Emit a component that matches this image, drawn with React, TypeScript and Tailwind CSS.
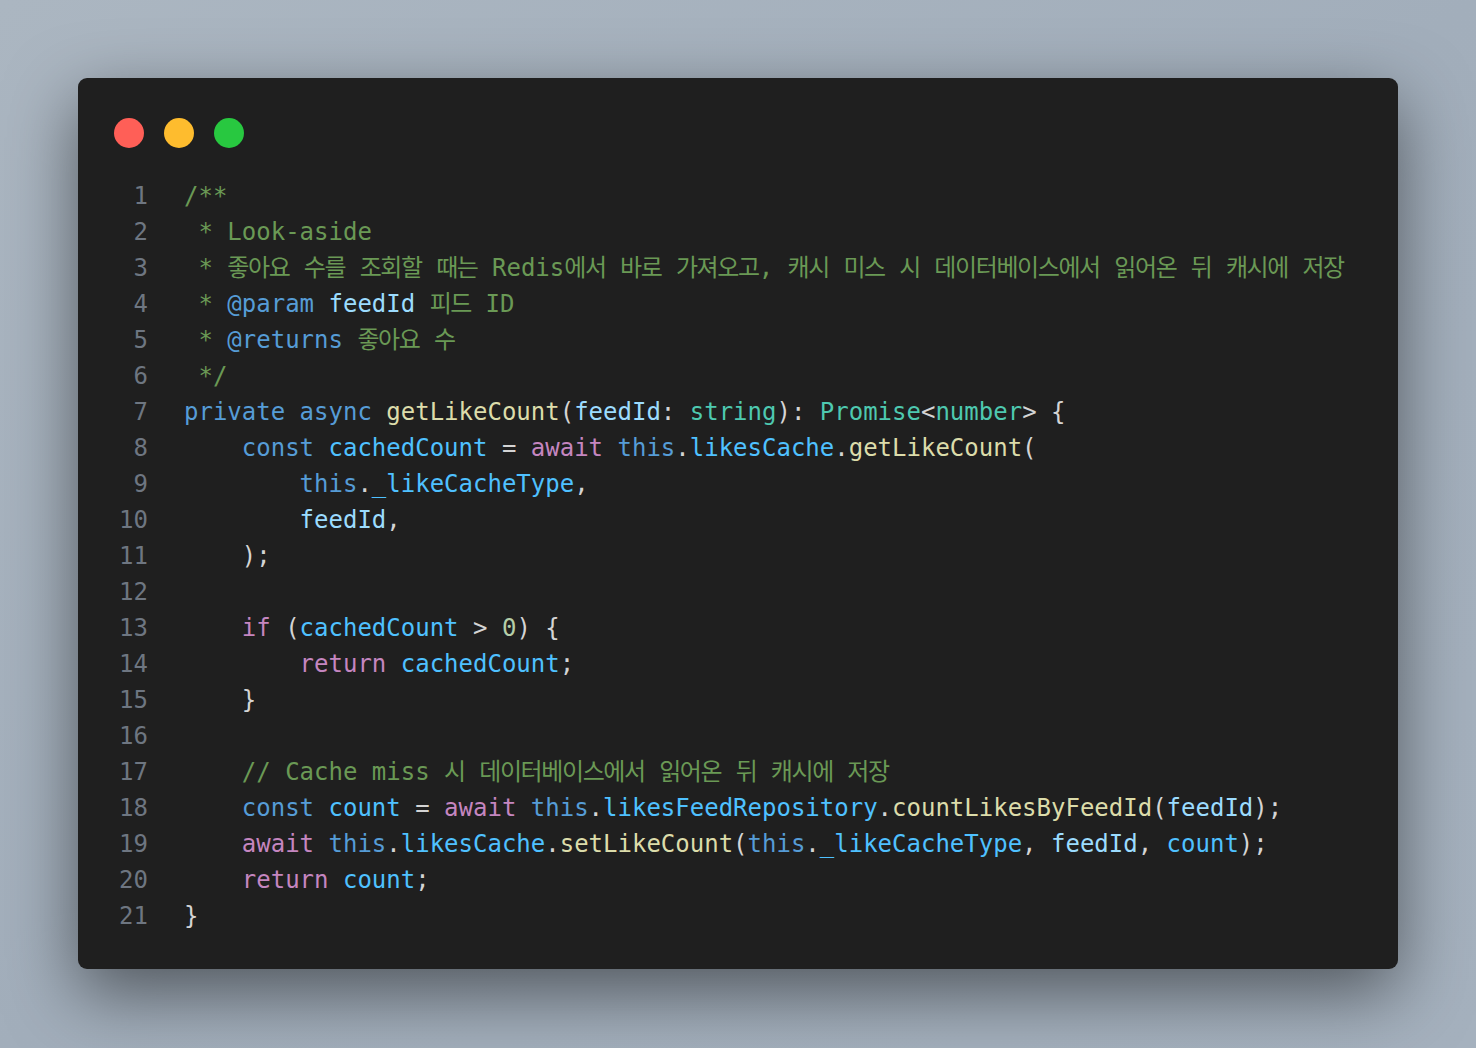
import React from "react";

type Tok = [string, string];

const C = {
  cm: "text-[#6a9955]",
  kw: "text-[#569cd6]",
  ctl: "text-[#c586c0]",
  fn: "text-[#dcdcaa]",
  v: "text-[#9cdcfe]",
  cn: "text-[#4fc1ff]",
  ty: "text-[#4ec9b0]",
  num: "text-[#b5cea8]",
  p: "text-[#d4d4d4]",
};

const lines: Tok[][] = [
  [["/**", C.cm]],
  [[" * Look-aside", C.cm]],
  [[" * 좋아요 수를 조회할 때는 Redis에서 바로 가져오고, 캐시 미스 시 데이터베이스에서 읽어온 뒤 캐시에 저장", C.cm]],
  [[" * ", C.cm], ["@param", C.kw], [" ", C.cm], ["feedId", C.v], [" 피드 ID", C.cm]],
  [[" * ", C.cm], ["@returns", C.kw], [" 좋아요 수", C.cm]],
  [[" */", C.cm]],
  [
    ["private async ", C.kw],
    ["getLikeCount", C.fn],
    ["(", C.p],
    ["feedId", C.v],
    [": ", C.p],
    ["string", C.ty],
    ["): ", C.p],
    ["Promise", C.ty],
    ["<", C.p],
    ["number", C.ty],
    ["> {", C.p],
  ],
  [
    ["    const ", C.kw],
    ["cachedCount", C.cn],
    [" = ", C.p],
    ["await", C.ctl],
    [" ", C.p],
    ["this", C.kw],
    [".", C.p],
    ["likesCache", C.cn],
    [".", C.p],
    ["getLikeCount", C.fn],
    ["(", C.p],
  ],
  [["        ", C.p], ["this", C.kw], [".", C.p], ["_likeCacheType", C.cn], [",", C.p]],
  [["        ", C.p], ["feedId", C.v], [",", C.p]],
  [["    );", C.p]],
  [],
  [
    ["    ", C.p],
    ["if", C.ctl],
    [" (", C.p],
    ["cachedCount", C.cn],
    [" > ", C.p],
    ["0", C.num],
    [") {", C.p],
  ],
  [["        ", C.p], ["return", C.ctl], [" ", C.p], ["cachedCount", C.cn], [";", C.p]],
  [["    }", C.p]],
  [],
  [["    // Cache miss 시 데이터베이스에서 읽어온 뒤 캐시에 저장", C.cm]],
  [
    ["    const ", C.kw],
    ["count", C.cn],
    [" = ", C.p],
    ["await", C.ctl],
    [" ", C.p],
    ["this", C.kw],
    [".", C.p],
    ["likesFeedRepository", C.cn],
    [".", C.p],
    ["countLikesByFeedId", C.fn],
    ["(", C.p],
    ["feedId", C.v],
    [");", C.p],
  ],
  [
    ["    ", C.p],
    ["await", C.ctl],
    [" ", C.p],
    ["this", C.kw],
    [".", C.p],
    ["likesCache", C.cn],
    [".", C.p],
    ["setLikeCount", C.fn],
    ["(", C.p],
    ["this", C.kw],
    [".", C.p],
    ["_likeCacheType", C.cn],
    [", ", C.p],
    ["feedId", C.v],
    [", ", C.p],
    ["count", C.cn],
    [");", C.p],
  ],
  [["    ", C.p], ["return", C.ctl], [" ", C.p], ["count", C.cn], [";", C.p]],
  [["}", C.p]],
];

// hangul runs get tighter spacing so they sit like the reference font
const renderText = (text: string) =>
  text.split(/([\uac00-\ud7a3]+)/).map((part, i) =>
    /[\uac00-\ud7a3]/.test(part) ? (
      <span key={i} className="tracking-[-1.4px]">
        {part}
      </span>
    ) : (
      part
    )
  );

const App = () => {
  return (
    <div className="min-h-screen w-full bg-gradient-to-br from-[#abb6c1] via-[#a2aebb] to-[#a5b1be] p-[78px]">
      <div className="w-[1320px] h-[891px] rounded-[9px] bg-[#1f1f1f] px-[36px] pt-[40px] shadow-[0_24px_70px_rgba(0,0,0,0.5)]">
        <div className="flex gap-[20px]">
          <div className="h-[30px] w-[30px] rounded-full bg-[#ff5f57]" />
          <div className="h-[30px] w-[30px] rounded-full bg-[#febc2e]" />
          <div className="h-[30px] w-[30px] rounded-full bg-[#28c840]" />
        </div>
        <div
          className="mt-[30px] text-[24px] leading-[36px] whitespace-pre"
          style={{ fontFamily: '"DejaVu Sans Mono", "Noto Sans CJK KR", monospace' }}
        >
          {lines.map((toks, i) => (
            <div key={i} className="flex">
              <div className="w-[34px] shrink-0 text-right text-[#6e7681]">{i + 1}</div>
              <div className="ml-[36px] h-[36px]">
                {toks.map(([t, c], j) => (
                  <span key={j} className={c}>
                    {renderText(t)}
                  </span>
                ))}
              </div>
            </div>
          ))}
        </div>
      </div>
    </div>
  );
};

export default App;
